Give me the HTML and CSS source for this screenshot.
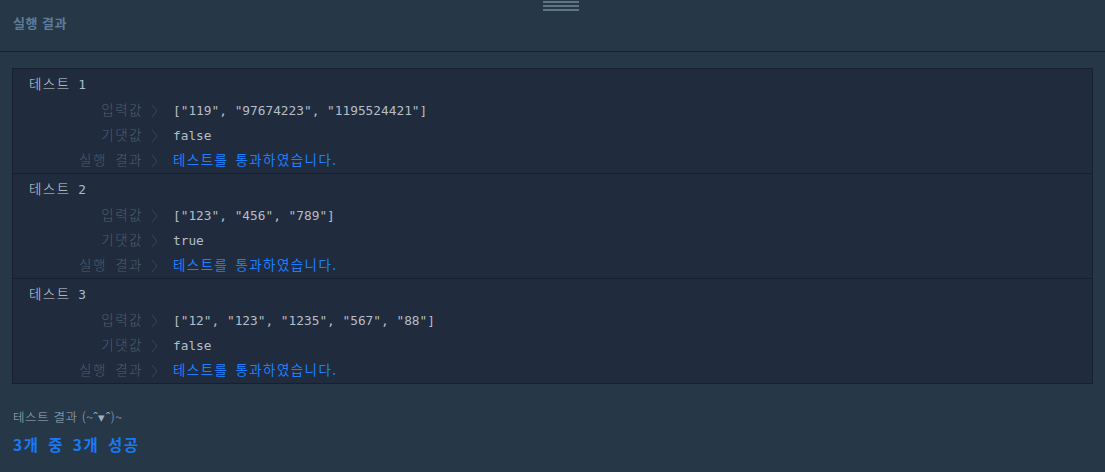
FILE: index.html
```html
<!DOCTYPE html>
<html lang="ko">
<head>
<meta charset="utf-8">
<link rel="stylesheet" href="styles.css">
</head>
<body>
<div class="page">
  <div class="handle"><span></span><span></span><span></span></div>
  <header class="title-bar"><h2 class="title">실행 결과</h2></header>
  <div class="content">
    <div class="tests">
      <section class="test">
        <div class="test-head"><span class="ko">테스트</span> <span class="num">1</span></div>
        <div class="row"><span class="label">입력값</span><span class="chev"><svg width="7" height="14" viewBox="0 0 7 14"><polyline points="1,1 6,7 1,13" fill="none" stroke="currentColor" stroke-width="1"/></svg></span><span class="value">["119", "97674223", "1195524421"]</span></div>
        <div class="row"><span class="label">기댓값</span><span class="chev"><svg width="7" height="14" viewBox="0 0 7 14"><polyline points="1,1 6,7 1,13" fill="none" stroke="currentColor" stroke-width="1"/></svg></span><span class="value">false</span></div>
        <div class="row"><span class="label">실행 결과</span><span class="chev"><svg width="7" height="14" viewBox="0 0 7 14"><polyline points="1,1 6,7 1,13" fill="none" stroke="currentColor" stroke-width="1"/></svg></span><span class="value pass">테스트를 통과하였습니다.</span></div>
      </section>
      <section class="test">
        <div class="test-head"><span class="ko">테스트</span> <span class="num">2</span></div>
        <div class="row"><span class="label">입력값</span><span class="chev"><svg width="7" height="14" viewBox="0 0 7 14"><polyline points="1,1 6,7 1,13" fill="none" stroke="currentColor" stroke-width="1"/></svg></span><span class="value">["123", "456", "789"]</span></div>
        <div class="row"><span class="label">기댓값</span><span class="chev"><svg width="7" height="14" viewBox="0 0 7 14"><polyline points="1,1 6,7 1,13" fill="none" stroke="currentColor" stroke-width="1"/></svg></span><span class="value">true</span></div>
        <div class="row"><span class="label">실행 결과</span><span class="chev"><svg width="7" height="14" viewBox="0 0 7 14"><polyline points="1,1 6,7 1,13" fill="none" stroke="currentColor" stroke-width="1"/></svg></span><span class="value pass">테스트를 통과하였습니다.</span></div>
      </section>
      <section class="test">
        <div class="test-head"><span class="ko">테스트</span> <span class="num">3</span></div>
        <div class="row"><span class="label">입력값</span><span class="chev"><svg width="7" height="14" viewBox="0 0 7 14"><polyline points="1,1 6,7 1,13" fill="none" stroke="currentColor" stroke-width="1"/></svg></span><span class="value">["12", "123", "1235", "567", "88"]</span></div>
        <div class="row"><span class="label">기댓값</span><span class="chev"><svg width="7" height="14" viewBox="0 0 7 14"><polyline points="1,1 6,7 1,13" fill="none" stroke="currentColor" stroke-width="1"/></svg></span><span class="value">false</span></div>
        <div class="row"><span class="label">실행 결과</span><span class="chev"><svg width="7" height="14" viewBox="0 0 7 14"><polyline points="1,1 6,7 1,13" fill="none" stroke="currentColor" stroke-width="1"/></svg></span><span class="value pass">테스트를 통과하였습니다.</span></div>
      </section>
    </div>
    <div class="summary">
      <div class="summary-label">테스트 결과 (~ˆ▾ˆ)~</div>
      <div class="summary-score">3개 중 3개 성공</div>
    </div>
  </div>
</div>
</body>
</html>
```

FILE: styles.css
```css
html, body {
  margin: 0;
  padding: 0;
  background: #263747;
}
body {
  font-family: "DejaVu Sans Mono", "Noto Sans CJK KR", monospace;
  font-size: 12.8px;
  color: #b4bec8;
}
.page {
  position: relative;
  width: 1105px;
  height: 472px;
  overflow: hidden;
}
.handle {
  position: absolute;
  top: 1px;
  left: 543px;
  width: 36px;
  display: flex;
  flex-direction: column;
  gap: 2px;
}
.handle span {
  display: block;
  height: 2px;
  background: #5e7683;
}
.title-bar {
  height: 52px;
  border-bottom: 1px solid #172230;
  display: flex;
  align-items: center;
  padding: 0 13px;
  box-sizing: border-box;
}
.title {
  margin: 0;
  font-family: "Noto Sans CJK KR", sans-serif;
  font-size: 13px;
  font-weight: 700;
  letter-spacing: 0.5px;
  color: #5e7d9b;
  transform: translateY(-3px);
}
.content {
  padding: 16px 12px 0;
}
.tests {
  background: #202b3d;
  border: 1px solid #172030;
}
.test {
  padding: 4px 0 0 16px;
  border-top: 1px solid #172030;
}
.test:first-child {
  border-top: none;
}
.test-head {
  height: 20px;
  line-height: 20px;
  margin-bottom: 5px;
  color: #c9d1d9;
}
.ko {
  font-family: "Noto Sans CJK KR", sans-serif;
  font-weight: 300;
  font-size: 13.5px;
  letter-spacing: 1.4px;
}
.num {
  color: #a9bdd2;
}
.row {
  display: flex;
  align-items: center;
  height: 25px;
}
.label {
  width: 114px;
  text-align: right;
  font-family: "Noto Sans CJK KR", sans-serif;
  font-weight: 300;
  font-size: 13.5px;
  line-height: 1;
  color: #4e5e70;
  letter-spacing: 1.5px;
  word-spacing: 3px;
  margin-right: -1.5px;
  padding-bottom: 2px;
}
.chev {
  width: 31.5px;
  display: flex;
  justify-content: flex-start;
  padding-left: 9px;
  box-sizing: border-box;
  color: #37465a;
}
.chev svg {
  display: block;
}
.value {
  color: #b4bec8;
}
.value.pass {
  font-family: "Noto Sans CJK KR", sans-serif;
  font-weight: 400;
  font-size: 13.5px;
  line-height: 1;
  padding-bottom: 2px;
  color: #1a80ff;
  letter-spacing: 1.4px;
  word-spacing: 2px;
}
.summary {
  padding-left: 1px;
  margin-top: 23px;
}
.summary-label {
  font-family: "Noto Sans CJK KR", sans-serif;
  font-weight: 300;
  font-size: 12.5px;
  letter-spacing: 0.6px;
  color: #a3b0be;
  height: 20px;
  line-height: 20px;
}
.summary-score {
  margin-top: 7px;
  font-family: "Noto Sans CJK KR", sans-serif;
  font-weight: 700;
  font-size: 15.5px;
  color: #1a7af5;
  line-height: 20px;
  letter-spacing: 1.5px;
  word-spacing: 3px;
}
```
